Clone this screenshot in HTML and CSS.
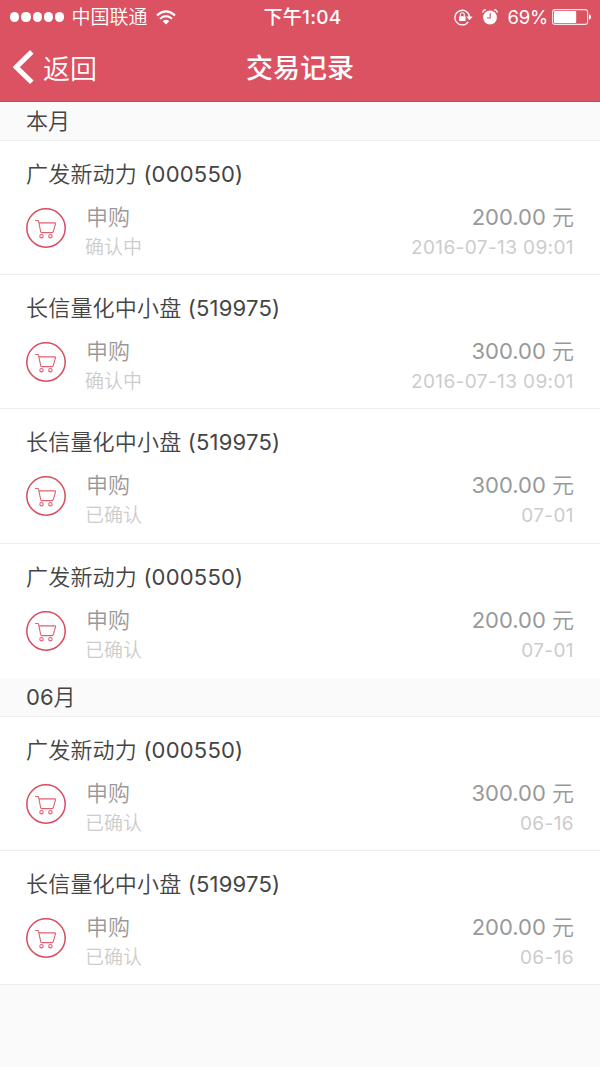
FILE: index.html
```html
<!DOCTYPE html>
<html lang="zh-CN">
<head>
    <meta charset="UTF-8">
    <meta name="viewport" content="width=device-width, initial-scale=1.0">
    <title>交易记录</title>
    <link rel="stylesheet" href="styles.css">
</head>
<body>
    <!-- shared cart icon -->
    <svg class="sprite" width="0" height="0">
        <symbol id="cart" viewBox="0 0 40 40">
            <circle cx="20" cy="20" r="19.2" fill="none" stroke="#da4a5c" stroke-width="1.5"/>
            <g fill="none" stroke="#e0606f" stroke-width="1.1" stroke-linejoin="round" stroke-linecap="round">
                <path d="M9.5 12.5h2.4q.5 0 .6.5l2.2 10.7q.2.9 1 .9h10.4q.8 0 1.1-.8l2.3-7.9q.3-1-.7-1H13"/>
                <circle cx="15.5" cy="28.2" r="1.7"/>
                <circle cx="24.4" cy="28.2" r="1.7"/>
            </g>
        </symbol>
    </svg>

    <header>
        <div class="status-bar">
            <div class="status-left">
                <span class="signal"><i></i><i></i><i></i><i></i><i></i></span>
                <span class="carrier">中国联通</span>
                <svg class="wifi" width="20" height="15" viewBox="0 0 20 15">
                    <g fill="none" stroke="#fff" stroke-width="2.1">
                        <path d="M1 5.4Q10-2.6 19 5.4"/>
                        <path d="M4 8.8Q10 3.4 16 8.8"/>
                    </g>
                    <path d="M6.7 11.2Q10 8.4 13.3 11.2L10 14.5Z" fill="#fff"/>
                </svg>
            </div>
            <div class="clock">下午1:04</div>
            <div class="status-right">
                <svg class="lock" width="19" height="17" viewBox="0 0 19 17">
                    <path d="M14.2 12.8A7.3 7.3 0 1 1 15.5 8" fill="none" stroke="#fff" stroke-width="1.3"/>
                    <path d="M12.4 7.5h6.2l-3.1 3.7z" fill="#fff"/>
                    <rect x="5" y="7.2" width="6.6" height="4.8" rx=".5" fill="#fff"/>
                    <path d="M6.3 7.5V5.8a2 2 0 0 1 4 0v1.7" fill="none" stroke="#fff" stroke-width="1.1"/>
                </svg>
                <svg class="alarm" width="16" height="16" viewBox="0 0 16 16">
                    <circle cx="8" cy="8.5" r="6.9" fill="#fff"/>
                    <path d="M.6 3.6Q1.2 1 3.8.7M15.4 3.6Q14.8 1 12.2.7" fill="none" stroke="#fff" stroke-width="1.2"/>
                    <path d="M8.2 4.2V9H5" fill="none" stroke="#db5262" stroke-width="1.2"/>
                </svg>
                <span class="percent">69%</span>
                <svg class="battery" width="40" height="16" viewBox="0 0 40 16">
                    <rect x=".6" y=".6" width="35" height="14.8" rx="2.4" fill="none" stroke="#fff" stroke-opacity=".85" stroke-width="1.1"/>
                    <rect x="2" y="2" width="22.2" height="12" rx="1" fill="#fff"/>
                    <path d="M37 5.2q2.2.6 2.2 2.8T37 10.8z" fill="#fff"/>
                </svg>
            </div>
        </div>
        <nav>
            <a class="back" href="#">
                <svg width="21" height="34" viewBox="0 0 21 34">
                    <path d="M18.8 1.9L3.2 17.1l15.6 15.1" fill="none" stroke="#fff" stroke-width="5"/>
                </svg>
                <span>返回</span>
            </a>
            <h1>交易记录</h1>
        </nav>
    </header>

    <section>
        <h2>本月</h2>
        <ul>
            <li>
                <h3>广发新动力 (000550)</h3>
                <div class="record">
                    <svg class="cart"><use href="#cart"/></svg>
                    <div class="type"><p>申购</p><small>确认中</small></div>
                    <div class="amount"><p>200.00 元</p><small>2016-07-13 09:01</small></div>
                </div>
            </li>
            <li>
                <h3>长信量化中小盘 (519975)</h3>
                <div class="record">
                    <svg class="cart"><use href="#cart"/></svg>
                    <div class="type"><p>申购</p><small>确认中</small></div>
                    <div class="amount"><p>300.00 元</p><small>2016-07-13 09:01</small></div>
                </div>
            </li>
            <li>
                <h3>长信量化中小盘 (519975)</h3>
                <div class="record">
                    <svg class="cart"><use href="#cart"/></svg>
                    <div class="type"><p>申购</p><small>已确认</small></div>
                    <div class="amount"><p>300.00 元</p><small>07-01</small></div>
                </div>
            </li>
            <li>
                <h3>广发新动力 (000550)</h3>
                <div class="record">
                    <svg class="cart"><use href="#cart"/></svg>
                    <div class="type"><p>申购</p><small>已确认</small></div>
                    <div class="amount"><p>200.00 元</p><small>07-01</small></div>
                </div>
            </li>
        </ul>
    </section>

    <section>
        <h2>06月</h2>
        <ul>
            <li>
                <h3>广发新动力 (000550)</h3>
                <div class="record">
                    <svg class="cart"><use href="#cart"/></svg>
                    <div class="type"><p>申购</p><small>已确认</small></div>
                    <div class="amount"><p>300.00 元</p><small>06-16</small></div>
                </div>
            </li>
            <li class="last">
                <h3>长信量化中小盘 (519975)</h3>
                <div class="record">
                    <svg class="cart"><use href="#cart"/></svg>
                    <div class="type"><p>申购</p><small>已确认</small></div>
                    <div class="amount"><p>200.00 元</p><small>06-16</small></div>
                </div>
            </li>
        </ul>
    </section>
</body>
</html>
```
FILE: styles.css
```css
* {
    box-sizing: border-box;
}

body {
    margin: 0;
    font-family: Inter, "Noto Sans CJK SC DemiLight", "Noto Sans CJK SC", sans-serif;
    font-weight: 400;
    background-color: #fafafa;
    color: #444;
}

h1, h2, h3, p, ul {
    margin: 0;
    padding: 0;
    font-weight: inherit;
}

.sprite {
    display: block;
}

header {
    height: 102px;
    background-color: #db5262;
    border-bottom: 1px solid #d14356;
    color: #fff;
}

/* status bar */
.status-bar {
    display: grid;
    grid-template-columns: 1fr auto 1fr;
    align-items: center;
    height: 33px;
    padding: 0 8px 0 10px;
    font-size: 19px;
    line-height: 33px;
}

.status-left, .status-right {
    display: flex;
    align-items: center;
}

.status-right {
    justify-content: flex-end;
}

.signal {
    display: flex;
    gap: 2px;
    margin-right: 7px;
}

.signal i {
    width: 9.3px;
    height: 9.3px;
    border-radius: 50%;
    background-color: #fff;
}

.wifi {
    margin-left: 8px;
}

.carrier, .clock {
    padding-top: 1px;
}

.clock {
    padding-left: 3px;
    font-family: Inter, "Noto Sans CJK SC", sans-serif;
    font-weight: 500;
    letter-spacing: .3px;
}

.lock {
    margin-right: 9px;
}

.alarm {
    margin-right: 9px;
}

.percent {
    margin-right: 4px;
    font-size: 18.5px;
    letter-spacing: -.2px;
}

/* title bar */
nav {
    display: grid;
    grid-template-columns: 1fr auto 1fr;
    align-items: center;
    height: 68px;
    padding: 0 13px;
}

.back {
    display: flex;
    align-items: center;
    gap: 9px;
    color: #fff;
    font-size: 27px;
    text-decoration: none;
}

nav h1 {
    font-family: "Noto Sans CJK SC", sans-serif;
    font-size: 27px;
    font-weight: 500;
    line-height: 36px;
}

/* list */
h2 {
    height: 38.5px;
    padding-left: 26px;
    border-bottom: 1px solid #eee;
    font-size: 22px;
    line-height: 39px;
}

ul {
    list-style: none;
    background-color: #fff;
}

li {
    height: 134.4px;
    padding: 17px 26px 0;
    border-bottom: 1px solid #eee;
}

li:last-child {
    border-bottom-color: #fff;
}

li.last {
    border-bottom-color: #eee;
}

h3 {
    font-size: 22px;
    line-height: 32px;
    letter-spacing: .2px;
}

.record {
    display: flex;
    align-items: flex-start;
    margin-top: 11px;
}

.cart {
    width: 40px;
    height: 40px;
    margin: 7px 20px 0 0;
}

.record p {
    font-size: 22px;
    line-height: 32px;
    color: #999;
}

.record small {
    display: block;
    font-size: 19px;
    line-height: 30px;
    color: #ccc;
}

.type small {
    margin-left: -1px;
}

.amount {
    margin-left: auto;
    text-align: right;
}

.amount small {
    letter-spacing: .4px;
}
```
